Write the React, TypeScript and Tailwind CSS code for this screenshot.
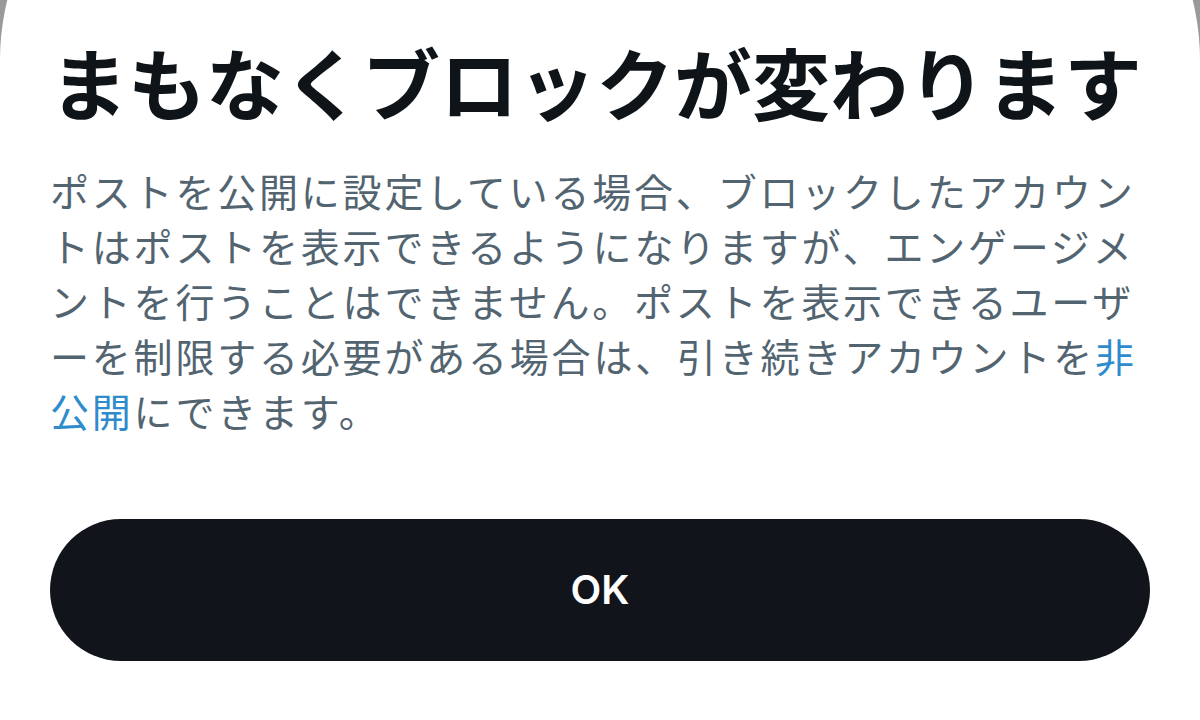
const lines: { text: string; link?: 'end' | 'start' }[] = [
  { text: 'ポストを公開に設定している場合、ブロックしたアカウン' },
  { text: 'トはポストを表示できるようになりますが、エンゲージメ' },
  { text: 'ントを行うことはできません。ポストを表示できるユーザ' },
  { text: 'ーを制限する必要がある場合は、引き続きアカウントを', link: 'end' },
  { text: 'にできます。', link: 'start' },
];

export default function App() {
  return (
    <div className="h-[720px] w-full overflow-hidden bg-[#9a9a9a]">
      <div className="-mt-[190px] h-[910px] rounded-t-[250px] bg-white pt-[190px]">
        <div
          className="px-[50px]"
          style={{ fontFamily: '"Noto Sans CJK JP", "Noto Sans", sans-serif' }}
        >
          <h1 className="pt-[42px] text-[78px] font-bold leading-none text-[#0f1419]">
            まもなくブロックが変わります
          </h1>

          <div className="mt-[43px] text-[39px] leading-[55px] tracking-[2.8px] text-[#536471]">
            {lines.map((line, idx) => (
              <div key={idx} className="whitespace-nowrap">
                {line.link === 'start' && <span className="text-[#2f8ccc]">公開</span>}
                {line.text}
                {line.link === 'end' && <span className="text-[#2f8ccc]">非</span>}
              </div>
            ))}
          </div>

          <button
            className="mt-[81px] flex h-[142px] w-full items-center justify-center rounded-full bg-[#11141a] text-[40px] font-semibold text-white"
            style={{ fontFamily: 'Inter, "Liberation Sans", sans-serif' }}
          >
            OK
          </button>
        </div>
      </div>
    </div>
  );
}
